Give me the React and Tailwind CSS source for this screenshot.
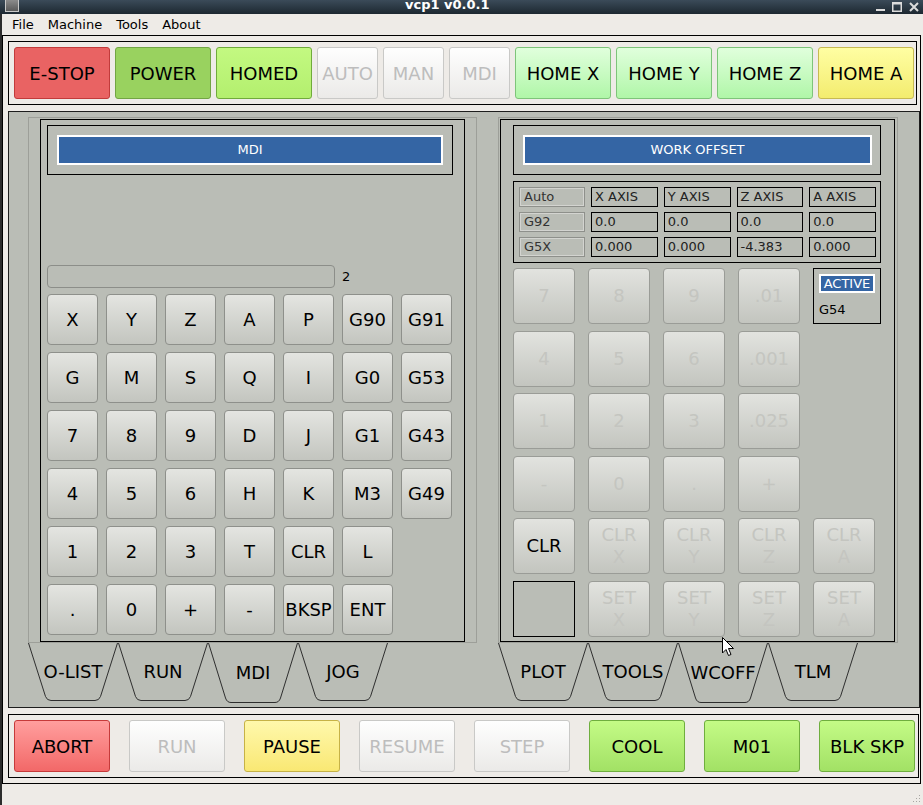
import React from 'react'

const off = 'bg-linear-to-b from-[#fefefe] to-[#ebeae8] border-[#c9c9c7] text-[#bdbdbd]'
const homeGreen = 'bg-linear-to-b from-[#e0ffdc] to-[#b0f6a8] border-[#7ec47a] text-black'

const topButtons = [
  { label: 'E-STOP', w: 'w-[96px]', tone: 'bg-[#e96363] border-[#c23b3b] text-black' },
  { label: 'POWER', w: 'w-[96px]', tone: 'bg-[#99d25f] border-[#72a544] text-black' },
  { label: 'HOMED', w: 'w-[96px]', tone: 'bg-linear-to-b from-[#c3f981] to-[#b3ef6e] border-[#70ab3b] text-black' },
  { label: 'AUTO', w: 'w-[61px]', tone: off },
  { label: 'MAN', w: 'w-[61px]', tone: off },
  { label: 'MDI', w: 'w-[61px]', tone: off },
  { label: 'HOME X', w: 'w-[96px]', tone: homeGreen },
  { label: 'HOME Y', w: 'w-[96px]', tone: homeGreen },
  { label: 'HOME Z', w: 'w-[96px]', tone: homeGreen },
  { label: 'HOME A', w: 'w-[96px]', tone: 'bg-linear-to-b from-[#fffea2] to-[#f3ec6e] border-[#c7ba52] text-black' },
]

const green = 'bg-linear-to-b from-[#c4fb86] to-[#a2e165] border-[#6fae3e] text-black'
const bottomButtons = [
  { label: 'ABORT', tone: 'bg-linear-to-b from-[#ff9e9e] to-[#f26868] border-[#c63a3a] text-black' },
  { label: 'RUN', tone: off },
  { label: 'PAUSE', tone: 'bg-linear-to-b from-[#fff8ab] to-[#f9e873] border-[#c6b246] text-black' },
  { label: 'RESUME', tone: off },
  { label: 'STEP', tone: off },
  { label: 'COOL', tone: green },
  { label: 'M01', tone: green },
  { label: 'BLK SKP', tone: green },
]

const mdiKeys = [
  ['X', 'Y', 'Z', 'A', 'P', 'G90', 'G91'],
  ['G', 'M', 'S', 'Q', 'I', 'G0', 'G53'],
  ['7', '8', '9', 'D', 'J', 'G1', 'G43'],
  ['4', '5', '6', 'H', 'K', 'M3', 'G49'],
  ['1', '2', '3', 'T', 'CLR', 'L', null],
  ['.', '0', '+', '-', 'BKSP', 'ENT', null],
]

const offsetKeys = [
  ['7', '8', '9', '.01', 'active'],
  ['4', '5', '6', '.001', null],
  ['1', '2', '3', '.025', null],
  ['-', '0', '.', '+', null],
  ['CLR', 'CLR|X', 'CLR|Y', 'CLR|Z', 'CLR|A'],
  ['blank', 'SET|X', 'SET|Y', 'SET|Z', 'SET|A'],
]

const offsetRows = [
  ['Auto', 'X AXIS', 'Y AXIS', 'Z AXIS', 'A AXIS'],
  ['G92', '0.0', '0.0', '0.0', '0.0'],
  ['G5X', '0.000', '0.000', '-4.383', '0.000'],
]

function Tab({ label, selected }) {
  return (
    <div className="relative w-[90px] h-[60px] flex items-center justify-center">
      <svg className="absolute left-0 top-0" width="90" height="60" viewBox="0 0 90 60">
        {selected ? (
          <path d="M0.5 0 L17.5 55 Q19 59.5 23 59.5 L67 59.5 Q71 59.5 72.5 55 L89.5 0" stroke="#2e2e2e" fill="none" />
        ) : (
          <path d="M0.5 0 L17.5 53.5 Q19 57.5 23 57.5 L67 57.5 Q71 57.5 72.5 53.5 L89.5 0" stroke="#2e2e2e" fill="none" />
        )}
      </svg>
      <span className={`relative whitespace-nowrap text-[18px] text-black ${selected ? '-mt-[1px]' : '-mt-[4px]'}`}>{label}</span>
    </div>
  )
}

function Header({ title, w, bar }) {
  return (
    <div className={`${w} h-[50px] border border-black p-[9px]`}>
      <div className={`${bar} h-[30px] border-2 border-white bg-[#3465a4] flex items-center justify-center text-[13px] text-white`}>
        {title}
      </div>
    </div>
  )
}

function OffsetKey({ k }) {
  if (k === null) return <div />
  if (k === 'active') {
    return (
      <div className="w-[68px] h-[56px] border border-black pt-[5px] pl-[5px] flex flex-col">
        <div className="w-[56px] h-[19px] border-2 border-white bg-[#3465a4] text-white text-[13px] leading-[15px] text-center">ACTIVE</div>
        <div className="mt-[7px] text-[13px] text-black">G54</div>
      </div>
    )
  }
  if (k === 'blank') return <div className="w-[62px] h-[56px] border border-black" />
  const enabled = k === 'CLR'
  const lines = k.split('|')
  return (
    <div
      className={`w-[62px] h-[56px] rounded-[4px] border border-[#9a9c97] bg-linear-to-b from-[#e2e3df] to-[#c3c5bf] flex flex-col items-center justify-center text-[18px] leading-[22px] ${
        enabled ? 'text-black border-[#8e908b]' : 'text-[#c4c5c0]'
      }`}
    >
      {lines.map((l) => (
        <span key={l}>{l}</span>
      ))}
    </div>
  )
}

export default function App() {
  return (
    <div className="relative w-[923px] h-[805px] overflow-hidden bg-[#eeebe7] font-['DejaVu_Sans',sans-serif] flex flex-col">
      {/* title bar */}
      <div className="h-[14px] bg-linear-to-b from-[#3b4b59] to-[#1d2831] flex items-start">
        <div className="ml-[5px] w-[14px] h-[12px] bg-linear-to-b from-[#8c8c8c] to-[#5a5a5a] border border-[#c8c8c8] border-t-0" />
        <span className="ml-[386px] -mt-[3px] text-[13px] font-bold text-white leading-[16px]">vcp1 v0.0.1</span>
        <div className="ml-auto mr-[4px] flex items-start gap-[7px] pt-[2px]">
          <svg width="9" height="10" viewBox="0 0 9 10"><rect x="0" y="7" width="9" height="2" fill="#dcdcdc" /></svg>
          <svg width="10" height="10" viewBox="0 0 10 10"><rect x="0.75" y="0.75" width="8.5" height="8.5" fill="none" stroke="#dcdcdc" strokeWidth="1.5" /><rect x="0" y="0" width="10" height="2.5" fill="#dcdcdc" /></svg>
          <svg width="10" height="10" viewBox="0 0 10 10"><path d="M1 1 L9 9 M9 1 L1 9" stroke="#dcdcdc" strokeWidth="2" /></svg>
        </div>
      </div>

      <div className="flex-1 flex flex-col border-l-2 border-[#2c2c2c]">
        {/* menu */}
        <div className="h-[21px] flex items-center pl-[10px] gap-[14px] text-[13px] text-black">
          <span>File</span>
          <span>Machine</span>
          <span>Tools</span>
          <span>About</span>
        </div>

        {/* central frame */}
        <div className="w-[919px] h-[749px] border border-black flex flex-col pl-[5px] pt-[5px]">
          {/* top buttons */}
          <div className="w-[909px] h-[64px] border border-black pl-[5px] pt-[5px] flex gap-[5px]">
            {topButtons.map((b) => (
              <div key={b.label} className={`${b.w} h-[52px] rounded-[3px] border flex items-center justify-center text-[18px] ${b.tone}`}>
                {b.label}
              </div>
            ))}
          </div>

          {/* main area */}
          <div className="mt-[6px] w-[912px] h-[597px] border border-[#1e1e1e] bg-[#babdb6] flex pl-[19px] pt-[5px]">
            {/* left column */}
            <div className="w-[449px] flex flex-col">
              <div className="h-[526px] border border-[#9d9f99] pl-[11px] pt-[1px]">
                <div className="w-[425px] h-[523px] border border-black flex flex-col pl-[6px] pt-[5px] pb-[6px]">
                  <Header title="MDI" w="w-[406px]" bar="w-[386px]" />
                  <div className="flex-1" />
                  <div className="h-[23px] flex items-center">
                    <div className="w-[288px] h-[23px] rounded-[4px] border border-[#8c8e89]" />
                    <span className="ml-[7px] text-[13px] text-black">2</span>
                  </div>
                  <div className="mt-[6px] grid grid-cols-[repeat(7,51px)] gap-x-[8px] gap-y-[7px]">
                    {mdiKeys.flat().map((k, i) =>
                      k === null ? (
                        <div key={i} />
                      ) : (
                        <div
                          key={i}
                          className="w-[51px] h-[51px] rounded-[4px] border border-[#8e908b] bg-linear-to-b from-[#e4e5e1] to-[#c3c5bf] flex items-center justify-center text-[18px] text-black"
                        >
                          {k}
                        </div>
                      )
                    )}
                  </div>
                </div>
              </div>
              <div className="flex">
                <Tab label="O-LIST" />
                <Tab label="RUN" />
                <Tab label="MDI" selected />
                <Tab label="JOG" />
              </div>
            </div>

            {/* right column */}
            <div className="ml-[21px] w-[400px] flex flex-col">
              <div className="h-[526px] border border-[#9d9f99] pl-[1px] pt-[1px]">
                <div className="w-[395px] h-[523px] border border-black flex flex-col pl-[12px] pt-[5px]">
                  <Header title="WORK OFFSET" w="w-[368px]" bar="w-[349px]" />
                  <div className="mt-[6px] w-[368px] h-[82px] border border-black p-[5px] pr-[4px] flex flex-col gap-[5px]">
                    {offsetRows.map((row) => (
                      <div key={row[0]} className="grid grid-cols-[66px_1fr_1fr_1fr_1fr] gap-x-[6px] h-[20px]">
                        {row.map((c, j) => (
                          <div
                            key={j}
                            className={`h-[20px] pl-[3px] text-[13px] leading-[18px] ${
                              j === 0
                                ? 'border border-[#8e908b] shadow-[inset_0_0_0_1px_#d3d4d0] text-[#333] pl-[4px]'
                                : 'border border-black text-[#222]'
                            }`}
                          >
                            {c}
                          </div>
                        ))}
                      </div>
                    ))}
                  </div>
                  <div className="mt-[5px] grid grid-cols-[repeat(5,62px)] gap-x-[13px] gap-y-[6.5px]">
                    {offsetKeys.flat().map((k, i) => (
                      <OffsetKey key={i} k={k} />
                    ))}
                  </div>
                </div>
              </div>
              <div className="flex">
                <Tab label="PLOT" />
                <Tab label="TOOLS" />
                <Tab label="WCOFF" selected />
                <Tab label="TLM" />
              </div>
            </div>
          </div>

          {/* bottom buttons */}
          <div className="mt-[6px] w-[911px] h-[64px] border border-black pl-[5px] pr-[3px] pt-[5px] flex justify-between">
            {bottomButtons.map((b) => (
              <div key={b.label} className={`w-[96px] h-[52px] rounded-[3px] border flex items-center justify-center text-[18px] ${b.tone}`}>
                {b.label}
              </div>
            ))}
          </div>
        </div>

        {/* status bar */}
        <div className="flex-1 flex items-end justify-end pr-[2px] pb-[2px]">
          <svg width="8" height="8" viewBox="0 0 8 8">
            <rect x="6" y="0" width="1" height="1" fill="#a8a6a2" />
            <rect x="6" y="3" width="1" height="1" fill="#a8a6a2" />
            <rect x="3" y="3" width="1" height="1" fill="#a8a6a2" />
            <rect x="6" y="6" width="1" height="1" fill="#a8a6a2" />
            <rect x="3" y="6" width="1" height="1" fill="#a8a6a2" />
            <rect x="0" y="6" width="1" height="1" fill="#a8a6a2" />
          </svg>
        </div>
      </div>

      {/* mouse pointer */}
      <svg className="absolute left-[722px] top-[637px]" width="13" height="20" viewBox="0 0 13 20">
        <path d="M0.5 0.5 L0.5 16 L4 12.5 L6.5 18.5 L9 17.5 L6.5 11.5 L11.5 11.5 Z" fill="white" stroke="black" strokeWidth="1" />
      </svg>
    </div>
  )
}
